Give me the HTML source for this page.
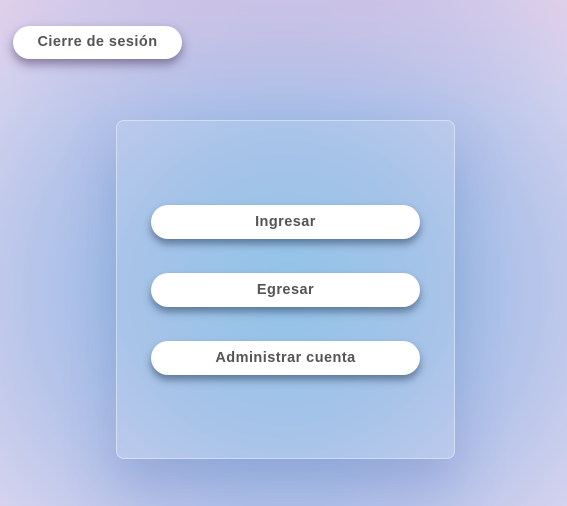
<!DOCTYPE html>
<html><head><meta charset="utf-8"><style>
html,body{margin:0;padding:0}
body{width:567px;height:506px;overflow:hidden;position:relative;
background:radial-gradient(ellipse 420px 400px at 285px 290px,#86bde6 0%,#9cbde6 35%,#b6c4ea 60%,#d3d2ee 85%,#e8d8ee 100%);
font-family:"Liberation Sans",sans-serif;}
.top{background:radial-gradient(ellipse 600px 200px at 285px -30px,rgba(205,185,225,0.7),rgba(205,185,225,0) 80%);position:absolute;inset:0}
.card{position:absolute;left:116px;top:120px;width:337px;height:337px;border:1px solid rgba(255,255,255,0.4);border-radius:8px;
background:rgba(255,255,255,0.1);box-shadow:0 25px 50px rgba(80,90,170,0.25)}
.btn{position:absolute;background:#fff;border-radius:18px;color:#555;font-weight:bold;font-size:14.5px;letter-spacing:0.45px;
text-align:center;box-shadow:0 5px 8px rgba(30,50,80,0.5)}
.b{left:151px;width:269px;height:34px;line-height:34px}
</style></head><body>
<div class="top"></div>
<div class="btn" style="left:13px;top:26px;width:169px;height:33px;line-height:33px;box-shadow:0 5px 10px rgba(60,40,80,0.5)">Cierre de sesión</div>
<div class="card"></div>
<div class="btn b" style="top:205px">Ingresar</div>
<div class="btn b" style="top:273px">Egresar</div>
<div class="btn b" style="top:341px">Administrar cuenta</div>
</body></html>
